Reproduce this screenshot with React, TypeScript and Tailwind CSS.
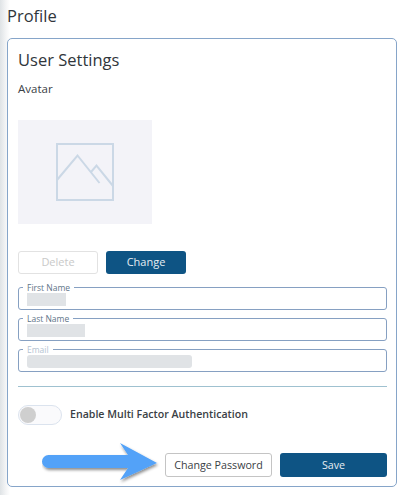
const font = { fontFamily: '"Open Sans", sans-serif' };

/** Outlined field with its label sitting on the border */
function Field({
  label,
  blur,
  muted,
  rounded,
}: {
  label: string;
  blur: string;
  muted?: boolean;
  rounded?: boolean;
}) {
  return (
    <div className="relative h-[23px] rounded-[3px] border border-[#86a0c2] pl-2 pt-[5px]">
      <span
        className={`absolute left-[4px] top-[-6px] bg-white px-[4px] text-[8.5px] leading-[11px] ${
          muted ? 'text-[#b4c3d2]' : 'text-[#5f7589]'
        }`}
      >
        {label}
      </span>
      <div className={`h-[13px] bg-[#e0e3e6] ${blur} ${rounded ? 'rounded-[3px]' : ''}`} />
    </div>
  );
}

export default function App() {
  return (
    <div
      className="flex h-[495px] w-[407px] flex-col overflow-hidden bg-[linear-gradient(to_right,#dfe3e6_0px,#f4f5f6_6px,#ffffff_10px)] pl-[7px] pr-[10px] text-[#2f3439]"
      style={font}
    >
      {/* Page title */}
      <h1 className="mt-[4px] text-[16.5px] font-medium leading-[24px] text-[#30363b]">Profile</h1>

      {/* Card */}
      <div className="relative mt-[10px] flex h-[449px] flex-col rounded-[5px] border border-[#86a5c9] bg-white pl-[10px] pr-[9px]">
        <h2 className="mt-[9px] text-[16.5px] font-medium leading-[24px] text-[#30363b]">User Settings</h2>
        <p className="mt-[9px] text-[11.5px] font-medium leading-[16px] text-[#3a4045]">Avatar</p>

        {/* Avatar placeholder */}
        <div className="mt-[23px] flex h-[104px] w-[134px] items-center justify-center bg-[#f3f3f8]">
          <svg width="60" height="60" viewBox="0 0 60 60" fill="none" stroke="#cbd8e6" strokeWidth="2">
            <rect x="2" y="2" width="56" height="56" />
            <path d="M2 38 L22.5 13.5 L44.5 41" />
            <path d="M36 30 L41.5 23.5 L58 44" />
          </svg>
        </div>

        {/* Avatar buttons */}
        <div className="mt-[27px] flex gap-[8px]">
          <button className="h-[23px] w-[80px] rounded-[3px] border border-[#e2e2e2] bg-white text-[11px] text-[#c9c9c9]">
            Delete
          </button>
          <button className="h-[23px] w-[80px] rounded-[3px] bg-[#0e5484] text-[11px] text-[#e6edf2]">
            Change
          </button>
        </div>

        {/* Fields */}
        <div className="mt-[13px] flex flex-col gap-[8px]">
          <Field label="First Name" blur="w-[39px]" />
          <Field label="Last Name" blur="w-[58px]" />
          <Field label="Email" blur="w-[165px]" muted rounded />
        </div>

        <div className="mt-[14px] h-px bg-[#9fc1d0]" />

        {/* MFA toggle */}
        <div className="mt-[18px] flex items-center gap-[8px]">
          <div className="flex h-[20px] w-[44px] items-center rounded-full border border-[#dbe3ee] bg-[#fafafc] pl-[1px]">
            <div className="h-[16px] w-[16px] rounded-full bg-[#cfcfcf]" />
          </div>
          <span className="text-[10.6px] font-semibold text-[#3a4045]">Enable Multi Factor Authentication</span>
        </div>

        {/* Actions */}
        <div className="mt-[28px] flex justify-end gap-[8px]">
          <button className="h-[24px] w-[107px] rounded-[3px] border border-[#c4c4c4] bg-white text-[10.7px] text-[#3a4045]">
            Change Password
          </button>
          <button className="h-[24px] w-[107px] rounded-[3px] bg-[#0e5484] text-[10.7px] text-[#e6edf2]">
            Save
          </button>
        </div>

        {/* Callout arrow */}
        <svg
          className="absolute left-[34px] top-[403px]"
          width="122"
          height="44"
          viewBox="0 0 122 44"
        >
          <defs>
            <filter id="arrowShadow" x="-10%" y="-20%" width="125%" height="150%">
              <feDropShadow dx="1" dy="2" stdDeviation="1.6" floodColor="#000000" floodOpacity="0.45" />
            </filter>
          </defs>
          <path
            d="M6.5 13 H86 L78 1 L115 21 L78 38 L86 26 H6.5 A6.5 6.5 0 0 1 6.5 13 Z"
            fill="#52a2f8"
            filter="url(#arrowShadow)"
          />
        </svg>
      </div>
    </div>
  );
}
